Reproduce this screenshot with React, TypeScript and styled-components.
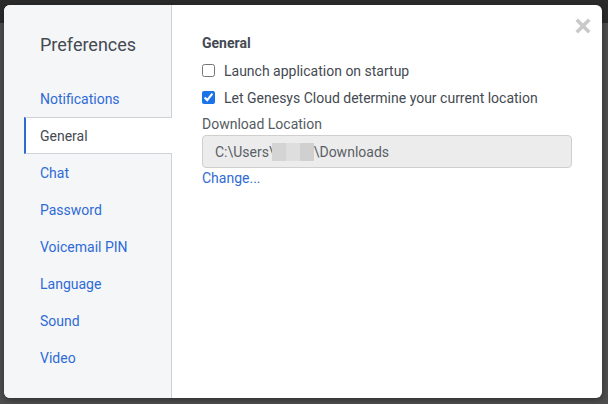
import styled, { createGlobalStyle } from 'styled-components';

const GlobalStyle = createGlobalStyle`
  html, body {
    margin: 0;
    padding: 0;
    background: #4c4c4c;
  }
  body {
    font-family: Roboto, "Liberation Sans", sans-serif;
  }
`

const navItems = ['Notifications', 'General', 'Chat', 'Password', 'Voicemail PIN', 'Language', 'Sound', 'Video']

const App = () => {
  return (
    <>
      <GlobalStyle />
      <Backdrop>
        <Modal>
          <Sidebar>
            <Title>Preferences</Title>
            <Nav>
              {navItems.map((item) => (
                <NavItem key={item} $active={item === 'General'}>{item}</NavItem>
              ))}
            </Nav>
          </Sidebar>
          <Content>
            <CloseButton aria-label="Close">
              <svg width="16" height="16" viewBox="0 0 16 16">
                <path d="M3 3 L13 13 M13 3 L3 13" stroke="#c9c9c9" strokeWidth="3.6" strokeLinecap="square" />
              </svg>
            </CloseButton>
            <SectionTitle>General</SectionTitle>
            <CheckRow>
              <Check type="checkbox" />
              <span>Launch application on startup</span>
            </CheckRow>
            <CheckRow>
              <Check type="checkbox" defaultChecked />
              <span>Let Genesys Cloud determine your current location</span>
            </CheckRow>
            <FieldLabel>Download Location</FieldLabel>
            <PathBox>
              C:\Users\
              <Redacted>
                <Blur $shade="#d4d4d4" />
                <Blur $shade="#dedede" />
                <Blur $shade="#d0d0d0" />
              </Redacted>
              \Downloads
            </PathBox>
            <ChangeLink href="#">Change...</ChangeLink>
          </Content>
        </Modal>
      </Backdrop>
    </>
  )
}

export default App;

const Backdrop = styled.div`
    width: 608px;
    height: 404px;
    box-sizing: border-box;
    padding: 5px 6px 6px 4px;
    background: linear-gradient(#2b2b2b 0, #2b2b2b 23px, #4e4e4e 23px);
`
const Modal = styled.div`
    width: 598px;
    height: 393px;
    display: flex;
    background: #fff;
    border-radius: 6px;
    overflow: hidden;
    box-shadow: 0 2px 6px rgba(0, 0, 0, 0.4);
`
const Sidebar = styled.div`
    width: 167px;
    flex-shrink: 0;
    background: #f5f6f8;
    border-right: 1px solid #cfd2d6;
    display: flex;
    flex-direction: column;
`
const Title = styled.div`
    padding: 29px 0 0 36px;
    height: 46px;
    font-size: 18px;
    color: #444a52;
    line-height: 22px;
`
const Nav = styled.div`
    display: flex;
    flex-direction: column;
    padding-left: 20px;
`
const NavItem = styled.div<{ $active?: boolean }>`
    height: 37px;
    display: flex;
    align-items: center;
    padding-left: 16px;
    font-size: 14px;
    color: ${(p) => (p.$active ? '#444a52' : '#2f6bd6')};
    cursor: pointer;
    box-sizing: border-box;
    ${(p) => p.$active && `
        background: #fff;
        border-left: 2px solid #2f6bd6;
        border-top: 1px solid #cfd2d6;
        border-bottom: 1px solid #cfd2d6;
        margin-right: -1px;
        padding-left: 14px;
    `}
`
const Content = styled.div`
    flex: 1;
    position: relative;
    padding: 30px 30px 0 30px;
    display: flex;
    flex-direction: column;
    align-items: flex-start;
    color: #444a52;
    font-size: 14px;
`
const CloseButton = styled.button`
    position: absolute;
    top: 13px;
    right: 11px;
    border: 0;
    background: none;
    padding: 0;
    cursor: pointer;
    display: flex;
`
const SectionTitle = styled.div`
    font-weight: 700;
    font-size: 14px;
    color: #444a52;
    line-height: 17px;
    margin-bottom: 5px;
`
const CheckRow = styled.label`
    display: flex;
    align-items: center;
    gap: 9px;
    height: 27px;
    font-size: 14px;
    color: #444a52;
`
const Check = styled.input`
    width: 13px;
    height: 13px;
    margin: 0;
    accent-color: #1a73e8;
`
const FieldLabel = styled.div`
    margin-top: 4px;
    line-height: 18px;
    font-size: 14px;
    color: #555b62;
`
const PathBox = styled.div`
    margin-top: 2px;
    width: 370px;
    height: 33px;
    box-sizing: border-box;
    display: flex;
    align-items: center;
    padding-left: 12px;
    background: #ececec;
    border: 1px solid #cfcfcf;
    border-radius: 4px;
    font-size: 14px;
    color: #5a5f66;
    white-space: pre;
`
const Redacted = styled.span`
    display: inline-flex;
    height: 18px;
    margin: 0 0 0 -3px;
`
const Blur = styled.span<{ $shade: string }>`
    display: inline-block;
    width: 14px;
    height: 18px;
    background: ${(p) => p.$shade};
`
const ChangeLink = styled.a`
    margin-top: 1px;
    font-size: 14px;
    color: #2f6bd6;
    text-decoration: none;
    line-height: 18px;
`
